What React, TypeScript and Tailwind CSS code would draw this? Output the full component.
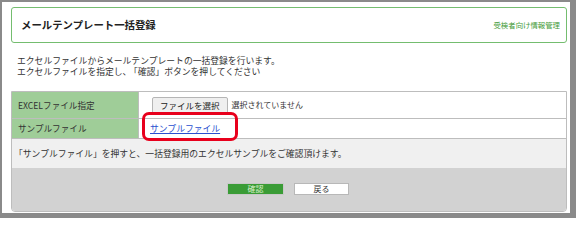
import React from "react"

const font = { fontFamily: '"Noto Sans CJK JP", "Noto Sans", sans-serif' }

export default function App() {
  return (
    <div
      className="w-[576px] h-[218px] bg-[#8a8a8a] pt-[2px] pl-[2px] pr-[6px] pb-[5px]"
      style={font}
    >
      <div className="h-full bg-white pl-[9px] pr-[3px] pt-[5px] flex flex-col">
        {/* Header */}
        <div className="h-[36px] border border-[#74bd6f] rounded-[3px] flex items-center justify-between pl-[9px] pr-[6px]">
          <h1 className="text-[10.4px] font-semibold text-[#222] leading-none">メールテンプレート一括登録</h1>
          <span className="text-[7.4px] text-[#3f9a37] leading-none">受検者向け情報管理</span>
        </div>

        {/* Description */}
        <div className="mt-[12px] pl-[6px] text-[8.8px] leading-[11px] text-[#333]">
          <p>エクセルファイルからメールテンプレートの一括登録を行います。</p>
          <p>
            <span>エクセルファイルを指定し、</span>
            <span className="ml-[2px]">「確認」ボタンを押してください</span>
          </p>
        </div>

        {/* Form */}
        <div className="mt-[14px] border border-[#bdbdbd] rounded-b-[4px] overflow-hidden">
          <div className="flex h-[27px] border-b border-[#bdbdbd]">
            <div className="w-[127px] bg-[#9fcd98] border-r border-[#bdbdbd] flex items-center pl-[6px] text-[8.6px] text-[#333]">
              EXCELファイル指定
            </div>
            <div className="flex-1 flex items-center pl-[13px] gap-[4px] text-[8.5px] text-[#333]">
              <button className="h-[17px] px-[7px] bg-[#efefef] border border-[#b5b5b5] rounded-[2px] text-[8.5px] text-[#222]">
                ファイルを選択
              </button>
              <span className="text-[8px]">選択されていません</span>
            </div>
          </div>
          <div className="flex h-[20px] border-b border-[#bdbdbd]">
            <div className="w-[127px] bg-[#9fcd98] border-r border-[#bdbdbd] flex items-center pl-[6px] text-[8.6px] text-[#333]">
              サンプルファイル
            </div>
            <div className="flex-1 flex items-center pl-[11px]">
              <div className="relative flex items-center">
                <a href="#" className="text-[8.8px] leading-[9px] text-[#2a4fd0] underline">サンプルファイル</a>
                <div className="absolute left-[-8px] top-[-12px] w-[96px] h-[29px] border-[3px] border-[#e8001c] rounded-[7px]" />
              </div>
            </div>
          </div>
          <div className="h-[29px] bg-[#f0f0f0] flex items-center pl-[2px] text-[8.8px] text-[#333]">
            「サンプルファイル」を押すと、一括登録用のエクセルサンプルをご確認頂けます。
          </div>
          <div className="h-[43px] bg-[#d2d2d2] flex justify-center items-start pt-[15px] gap-[10px] pr-[2px]">
            <button className="w-[57px] h-[12px] bg-[#3a9c36] border border-[#c9c9c9] text-[8px] leading-none text-[#d8f0c8]">
              確認
            </button>
            <button className="w-[55px] h-[12px] bg-white border border-[#b8b8b8] text-[8px] leading-none text-[#333]">
              戻る
            </button>
          </div>
        </div>
      </div>
    </div>
  )
}
